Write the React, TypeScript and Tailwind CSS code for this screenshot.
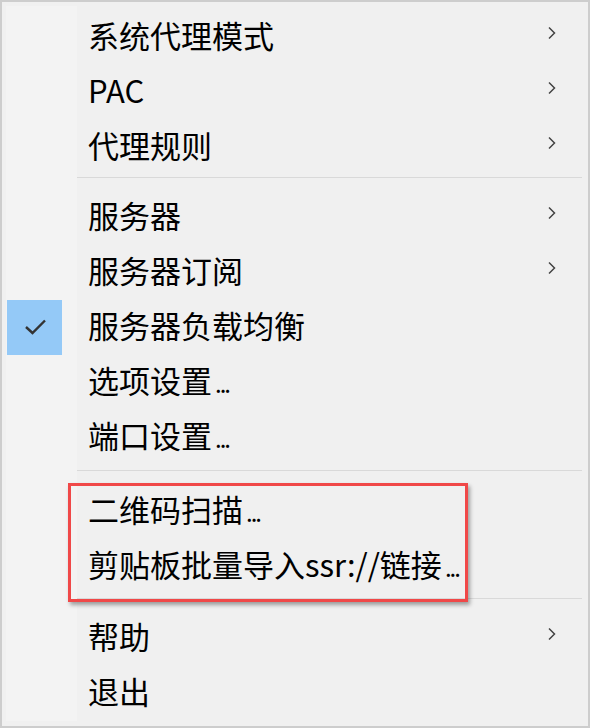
import React from "react";

type Item =
  | { type: "item"; label: string; dots?: boolean; sub?: boolean; checked?: boolean }
  | { type: "sep"; h: number; line: number };

const items: Item[] = [
  { type: "item", label: "系统代理模式", sub: true },
  { type: "item", label: "PAC", sub: true },
  { type: "item", label: "代理规则", sub: true },
  { type: "sep", h: 15, line: 2 },
  { type: "item", label: "服务器", sub: true },
  { type: "item", label: "服务器订阅", sub: true },
  { type: "item", label: "服务器负载均衡", checked: true },
  { type: "item", label: "选项设置", dots: true },
  { type: "item", label: "端口设置", dots: true },
  { type: "sep", h: 19, line: 5 },
  { type: "item", label: "二维码扫描", dots: true },
  { type: "item", label: "剪贴板批量导入ssr://链接", dots: true },
  { type: "sep", h: 17, line: 4 },
  { type: "item", label: "帮助", sub: true },
  { type: "item", label: "退出" },
];

function Chevron() {
  return (
    <svg width="10" height="14" viewBox="0 0 10 14" className="-translate-y-[5px]">
      <path d="M2 1.5 L7.5 7 L2 12.5" fill="none" stroke="#444" strokeWidth="1.5" strokeLinejoin="miter" />
    </svg>
  );
}

function Check() {
  return (
    <div className="ml-px w-[55px] h-[55px] bg-[#94c9f7] flex items-center justify-center">
      <svg width="55" height="55" viewBox="0 0 55 55">
        <path d="M19 27 L25.5 33 L38 20.5" fill="none" stroke="#333" strokeWidth="2.4" />
      </svg>
    </div>
  );
}

export default function App() {
  return (
    <div
      className="relative w-[590px] h-[728px] border-2 border-[#cdcdcd] bg-[#f0f0f0] p-1 text-black"
      style={{ fontFamily: '"Noto Sans CJK SC", "Noto Sans", sans-serif' }}
    >
      <div className="flex flex-col">
        <div className="flex h-[4px]">
          <div className="w-[71px] bg-[#f3f3f3]" />
        </div>
        {items.map((it, i) =>
          it.type === "sep" ? (
            <div key={i} className="flex" style={{ height: it.h }}>
              <div className="w-[71px] bg-[#f3f3f3]" />
              <div className="flex-1 pr-[2px]" style={{ paddingTop: it.line }}>
                <div className="h-px bg-[#d9d9d9]" />
              </div>
            </div>
          ) : (
            <div key={i} className="flex h-[55px]">
              <div className="w-[71px] bg-[#f3f3f3]">{it.checked ? <Check /> : null}</div>
              <div className="flex-1 flex items-center justify-between pl-[11px] pr-[27px]">
                <span className="text-[31px] leading-none -translate-y-[3px] whitespace-nowrap">
                  {it.label}
                  {it.dots ? (
                    <span className="ml-[3px] text-[24px] tracking-[-2px]">...</span>
                  ) : null}
                </span>
                {it.sub ? <Chevron /> : null}
              </div>
            </div>
          )
        )}
      </div>
      <div className="absolute left-[66px] top-[481px] w-[400px] h-[119px] border-[3px] border-[#f04848] shadow-[2px_3px_4px_rgba(0,0,0,0.35)]" />
    </div>
  );
}
